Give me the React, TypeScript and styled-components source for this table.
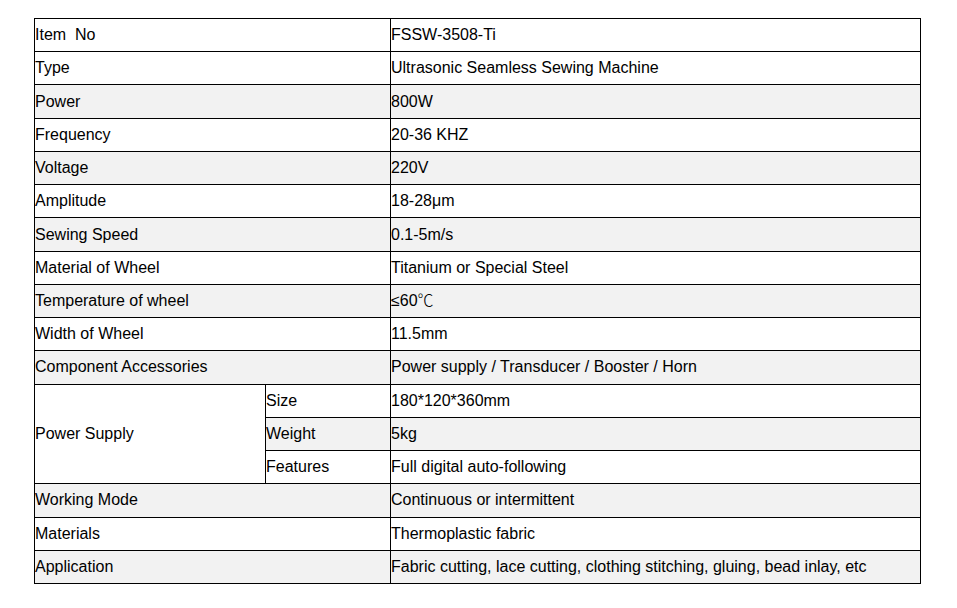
import React from 'react';
import styled, { createGlobalStyle } from 'styled-components';

const GlobalStyle = createGlobalStyle`
  html, body {
    margin: 0;
    padding: 0;
    background: #ffffff;
  }
  body {
    font-family: "Liberation Sans", Arial, sans-serif;
  }
`;

const Page = styled.div`
  padding: 18px 0 0 34px;
`;

const SpecTable = styled.table`
  border-collapse: collapse;
  width: 887px;
  height: 566px;
  table-layout: fixed;
  font-family: "Liberation Sans", Arial, sans-serif;
  font-size: 16px;
  color: #000000;
`;

const Row = styled.tr<{ shaded?: boolean }>`
  background: ${({ shaded }) => (shaded ? '#f2f2f2' : '#ffffff')};
`;

const Cell = styled.td<{ shaded?: boolean }>`
  border: 1px solid #000000;
  padding: 0;
  vertical-align: middle;
  white-space: nowrap;
  line-height: 18px;
  background: ${({ shaded }) => (shaded === undefined ? 'inherit' : shaded ? '#f2f2f2' : '#ffffff')};
`;

const Label = styled.span`
  white-space: pre;
`;

const Degree = styled.span`
  display: inline-block;
  line-height: 14px;
  vertical-align: baseline;
  font-family: "Noto Sans CJK SC", "DejaVu Serif", serif;
  font-weight: 300;
`;

type Spec = { label: string; value: React.ReactNode };

const top: Spec[] = [
  { label: 'Item  No', value: 'FSSW-3508-Ti' },
  { label: 'Type', value: 'Ultrasonic Seamless Sewing Machine' },
  { label: 'Power', value: '800W' },
  { label: 'Frequency', value: '20-36 KHZ' },
  { label: 'Voltage', value: '220V' },
  { label: 'Amplitude', value: '18-28μm' },
  { label: 'Sewing Speed', value: '0.1-5m/s' },
  { label: 'Material of Wheel', value: 'Titanium or Special Steel' },
  {
    label: 'Temperature of wheel',
    value: (
      <>
        ≤60<Degree>℃</Degree>
      </>
    ),
  },
  { label: 'Width of Wheel', value: '11.5mm' },
  { label: 'Component Accessories', value: 'Power supply / Transducer / Booster / Horn' },
];

const supply: Spec[] = [
  { label: 'Size', value: '180*120*360mm' },
  { label: 'Weight', value: '5kg' },
  { label: 'Features', value: 'Full digital auto-following' },
];

const bottom: Spec[] = [
  { label: 'Working Mode', value: 'Continuous or intermittent' },
  { label: 'Materials', value: 'Thermoplastic fabric' },
  { label: 'Application', value: 'Fabric cutting, lace cutting, clothing stitching, gluing, bead inlay, etc' },
];

export default function App() {
  return (
    <>
      <GlobalStyle />
      <Page>
        <SpecTable>
          <colgroup>
            <col style={{ width: 231 }} />
            <col style={{ width: 125 }} />
            <col />
          </colgroup>
          <tbody>
            {top.map((s, i) => (
              <Row key={s.label} shaded={i > 0 && i % 2 === 0}>
                <Cell colSpan={2}>
                  <Label>{s.label}</Label>
                </Cell>
                <Cell>{s.value}</Cell>
              </Row>
            ))}
            {supply.map((s, i) => (
              <Row key={s.label} shaded={i === 1}>
                {i === 0 && (
                  <Cell rowSpan={3} shaded={false}>
                    Power Supply
                  </Cell>
                )}
                <Cell>{s.label}</Cell>
                <Cell>{s.value}</Cell>
              </Row>
            ))}
            {bottom.map((s, i) => (
              <Row key={s.label} shaded={i % 2 === 0}>
                <Cell colSpan={2}>{s.label}</Cell>
                <Cell>{s.value}</Cell>
              </Row>
            ))}
          </tbody>
        </SpecTable>
      </Page>
    </>
  );
}
